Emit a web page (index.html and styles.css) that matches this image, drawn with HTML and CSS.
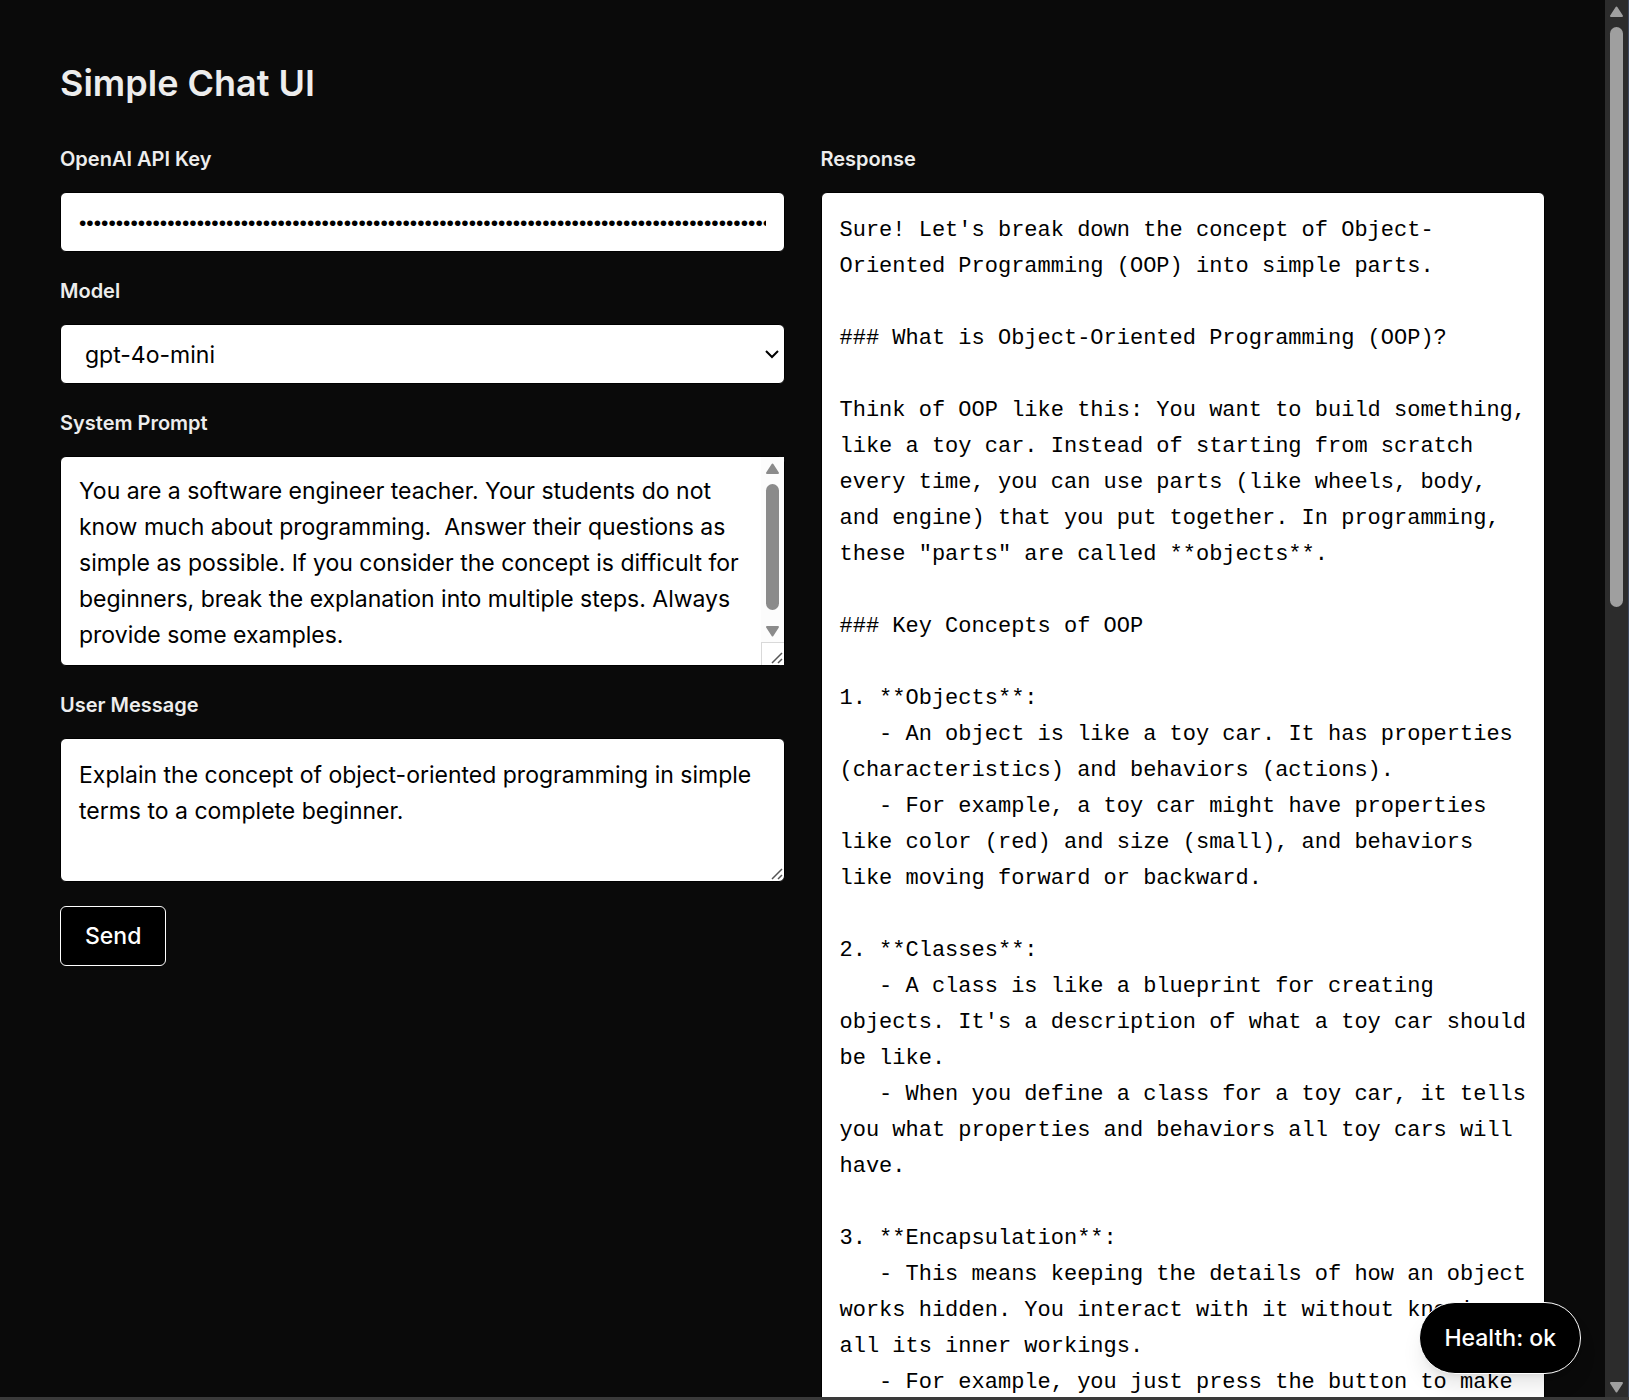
FILE: index.html
```html
<!DOCTYPE html>
<html lang="en">
<head>
<meta charset="utf-8">
<title>Simple Chat UI</title>
<link rel="stylesheet" href="styles.css">
</head>
<body>
<div class="window">
  <main class="page">
    <h1 class="title">Simple Chat UI</h1>
    <div class="columns">
      <form class="form">
        <div class="field">
          <label class="label" for="key">OpenAI API Key</label>
          <input class="control key" id="key" type="password" value="sk-proj-0000000000000000000000000000000000000000000000000000000000000000000000000000000000000000000000000000000000000000">
        </div>
        <div class="field">
          <label class="label" for="model">Model</label>
          <div class="holder">
            <select class="control select" id="model"><option>gpt-4o-mini</option></select>
            <svg class="chevron" width="14" height="9" viewBox="0 0 14 9"><path d="M1 1l6 6 6-6" fill="none" stroke="#000" stroke-width="2"/></svg>
          </div>
        </div>
        <div class="field">
          <label class="label" for="system">System Prompt</label>
          <div class="holder">
            <textarea class="control area system" id="system">You are a software engineer teacher. Your students do not know much about programming.  Answer their questions as simple as possible. If you consider the concept is difficult for beginners, break the explanation into multiple steps. Always provide some examples.</textarea>
            <div class="scroll light">
              <svg class="arrow" width="15" height="12" viewBox="0 0 15 12"><path d="M7.500 1.500L13 10H2z"/></svg>
              <div class="thumb"></div>
              <svg class="arrow" width="15" height="12" viewBox="0 0 15 12"><path d="M7.500 10.500L13 2H2z"/></svg>
              <div class="corner"></div>
            </div>
            <svg class="grip" width="12" height="12" viewBox="0 0 12 12"><path d="M1 11L11 1M7 11l4-4"/></svg>
          </div>
        </div>
        <div class="field">
          <label class="label" for="message">User Message</label>
          <div class="holder">
            <textarea class="control area" id="message" rows="3">Explain the concept of object-oriented programming in simple terms to a complete beginner.</textarea>
            <svg class="grip" width="12" height="12" viewBox="0 0 12 12"><path d="M1 11L11 1M7 11l4-4"/></svg>
          </div>
        </div>
        <button class="send" type="button">Send</button>
      </form>
      <section class="field">
        <h2 class="label">Response</h2>
        <pre class="response">Sure! Let's break down the concept of Object-Oriented Programming (OOP) into simple parts.

### What is Object-Oriented Programming (OOP)?

Think of OOP like this: You want to build something, like a toy car. Instead of starting from scratch every time, you can use parts (like wheels, body, and engine) that you put together. In programming, these "parts" are called **objects**.

### Key Concepts of OOP

1. **Objects**:
   - An object is like a toy car. It has properties (characteristics) and behaviors (actions).
   - For example, a toy car might have properties like color (red) and size (small), and behaviors like moving forward or backward.

2. **Classes**:
   - A class is like a blueprint for creating objects. It's a description of what a toy car should be like.
   - When you define a class for a toy car, it tells you what properties and behaviors all toy cars will have.

3. **Encapsulation**:
   - This means keeping the details of how an object works hidden. You interact with it without knowing all its inner workings.
   - For example, you just press the button to make</pre>
      </section>
    </div>
  </main>
  <div class="scroll dark">
    <svg class="arrow" width="15" height="12" viewBox="0 0 15 12"><path d="M7.500 1.500L13 10H2z"/></svg>
    <div class="thumb"></div>
    <svg class="arrow" width="15" height="12" viewBox="0 0 15 12"><path d="M7.500 10.500L13 2H2z"/></svg>
  </div>
  <div class="health">Health: ok</div>
</div>
</body>
</html>
```
FILE: styles.css
```css
*, *::before, *::after { box-sizing: border-box; }

body {
  margin: 0;
  background: #0a0a0a;
  color: #ededed;
  font: 23px/36px Inter, "Liberation Sans", sans-serif;
}

.window {
  position: relative;
  display: grid;
  grid-template-columns: 1fr 24px;
  height: 100vh;
  overflow: hidden;
  border-bottom: 3px solid #3a3a3a;
}

.page {
  min-width: 0;
  min-height: 0;
  overflow: hidden;
  padding: 60px;
}

.title {
  margin: 0 0 38px;
  font-size: 36px;
  line-height: 46px;
  font-weight: 600;
}

.columns {
  display: grid;
  grid-template-columns: 1fr 1fr;
  align-items: start;
  gap: 36px;
}

.form {
  display: flex;
  flex-direction: column;
  gap: 24px;
}

.field {
  display: flex;
  flex-direction: column;
  gap: 18px;
  min-width: 0;
}

.label {
  margin: 0;
  font-size: 20px;
  line-height: 30px;
  font-weight: 600;
}

.holder { position: relative; display: flex; }

.control {
  width: 100%;
  min-height: 60px;
  margin: 0;
  padding: 0 18px;
  border: 1px solid #000;
  border-radius: 6px;
  background: #fff;
  color: #000;
  font: inherit;
}

.key { padding-top: 2px; font-family: "Liberation Sans", sans-serif; font-size: 21px; }

.select { appearance: none; padding: 2px 24px 0; }

.chevron { position: absolute; right: 6px; top: 26px; }

.area {
  display: block;
  padding: 18px;
  height: 144px;
  resize: none;
  overflow: hidden;
}

.system { height: 210px; padding: 16px 42px 16px 18px; }

.grip {
  position: absolute;
  right: 2px;
  bottom: 2px;
  fill: none;
  stroke: #555;
  stroke-width: 1.5;
}

.scroll {
  display: flex;
  flex-direction: column;
  align-items: center;
  gap: 9px;
}

.scroll .arrow { flex: none; stroke-width: 2; stroke-linejoin: round; }

.thumb { width: 13px; border-radius: 7px; }

.light {
  position: absolute;
  top: 1px;
  right: 1px;
  bottom: 1px;
  width: 23px;
  padding-top: 6px;
  background: #fcfcfc;
}

.light .arrow { fill: #8b8b8b; stroke: #8b8b8b; }
.light .thumb { height: 126px; background: #8b8b8b; margin-bottom: 6px; }
.light .corner {
  position: absolute;
  left: 0;
  right: 0;
  bottom: 0;
  height: 23px;
  border: solid #d9d9d9;
  border-width: 1px 0 0 1px;
  background: #fff;
}

.dark {
  padding: 6px 0 4px;
  background: #2c2c2c;
  border-right: 1px solid #3f4a61;
}

.dark .arrow { fill: #9f9f9f; stroke: #9f9f9f; }
.dark .thumb { height: 580px; margin-bottom: auto; background: #9f9f9f; }

.send {
  align-self: flex-start;
  height: 60px;
  padding: 0 24px;
  border: 1px solid #fff;
  border-radius: 6px;
  background: #000;
  color: #fff;
  font: inherit;
  font-weight: 500;
}

.response {
  margin: 0;
  padding: 20px 12px 18px 18px;
  border: 1px solid #000;
  border-radius: 6px;
  background: #fff;
  color: #000;
  font: 22px/36px "Liberation Mono", monospace;
  white-space: pre-wrap;
}

.health {
  position: absolute;
  right: 48px;
  bottom: 23px;
  padding: 17px 24px;
  border: 1px solid #fff;
  border-radius: 36px;
  background: #000;
  color: #fff;
  font-weight: 500;
  box-shadow: 0 15px 22px -4px rgba(0, 0, 0, .1), 0 6px 9px -6px rgba(0, 0, 0, .1);
}
```
